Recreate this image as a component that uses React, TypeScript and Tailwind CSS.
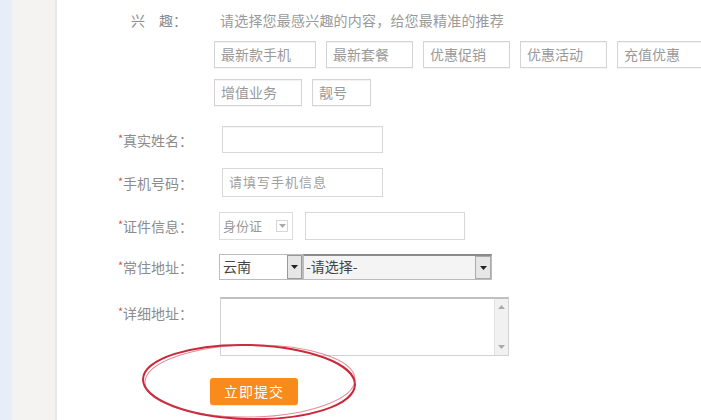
import React from "react";

const Tag = ({ text, w }: { text: string; w: string }) => (
  <div
    className={`${w} h-[27px] border border-[#d4d4d4] shadow-[inset_0_1px_1px_rgba(0,0,0,0.05),0_1px_0_rgba(0,0,0,0.04)] pl-[6px] text-[14px] leading-[25px] text-[#9a9a9a] shrink-0 bg-white`}
  >
    {text}
  </div>
);

const Label = ({ text }: { text: string }) => (
  <div className="flex items-center h-[20px] text-[14px] leading-[20px] text-[#8c8c8c]">
    <span className="text-[#e0504a] text-[11px] w-[4px] mr-[1px] -mt-[4px]">*</span>
    <span>{text}</span>
  </div>
);

const Tri = ({ down = true, color = "#222" }: { down?: boolean; color?: string }) => (
  <svg width="7" height="4" viewBox="0 0 7 4">
    {down ? <path d="M0 0 L7 0 L3.5 4 Z" fill={color} /> : <path d="M0 4 L7 4 L3.5 0 Z" fill={color} />}
  </svg>
);

export default function App() {
  return (
    <div
      className="w-[701px] h-[420px] flex overflow-hidden bg-white"
      style={{ fontFamily: '"Noto Sans CJK SC", "Noto Sans", sans-serif' }}
    >
      <div className="w-[12px] shrink-0 bg-[#e8eef8]" />
      <div className="w-[45px] shrink-0 bg-[#f4f3f1] border-r-2 border-[#e8e7e5]" />
      <div className="relative flex-1 pl-[61px] pt-[10px] flex flex-col">
        {/* interest */}
        <div className="flex items-center h-[20px]">
          <div className="w-[96px] pl-[13px] text-[14px] leading-[20px] text-[#8c8c8c]">兴　趣：</div>
          <div className="pl-[6px] text-[14px] leading-[20px] text-[#9a9a9a] whitespace-nowrap tracking-[0.2px]">
            请选择您最感兴趣的内容，给您最精准的推荐
          </div>
        </div>
        <div className="flex pl-[96px] mt-[11px] gap-[10px]">
          <Tag text="最新款手机" w="w-[102px]" />
          <Tag text="最新套餐" w="w-[87px]" />
          <Tag text="优惠促销" w="w-[87px]" />
          <Tag text="优惠活动" w="w-[87px]" />
          <Tag text="充值优惠" w="w-[87px]" />
        </div>
        <div className="flex pl-[96px] mt-[11px] gap-[10px]">
          <Tag text="增值业务" w="w-[88px]" />
          <Tag text="靓号" w="w-[59px]" />
        </div>

        {/* real name */}
        <div className="flex items-center mt-[20px] h-[27px]">
          <div className="w-[104px]">
            <Label text="真实姓名：" />
          </div>
          <div className="w-[161px] h-[27px] border border-[#d8d8d8] shadow-[inset_0_1px_1px_rgba(0,0,0,0.04)]" />
        </div>

        {/* phone */}
        <div className="flex items-center mt-[15px] h-[29px]">
          <div className="w-[104px]">
            <Label text="手机号码：" />
          </div>
          <div className="w-[161px] h-[29px] border border-[#d8d8d8] pl-[6px] text-[13px] leading-[25px] text-[#a0a0a0] tracking-[1px]">
            请填写手机信息
          </div>
        </div>

        {/* id */}
        <div className="flex items-center mt-[15px] h-[28px]">
          <div className="w-[101px]">
            <Label text="证件信息：" />
          </div>
          <div className="w-[74px] h-[28px] border border-[#dcdcdc] flex items-center pl-[3px] pr-[4px]">
            <span className="text-[13px] text-[#999] flex-1">身份证</span>
            <span className="w-[12px] h-[12px] border border-[#d6d6d6] flex items-center justify-center">
              <Tri color="#aaa" />
            </span>
          </div>
          <div className="ml-[12px] w-[160px] h-[28px] border border-[#d8d8d8]" />
        </div>

        {/* address */}
        <div className="flex items-center mt-[14px] h-[26px]">
          <div className="w-[101px]">
            <Label text="常住地址：" />
          </div>
          <div className="w-[84px] h-[26px] border border-[#bcbcbc] flex items-stretch bg-white">
            <span className="flex-1 pl-[3px] text-[14px] leading-[22px] text-[#444]">云南</span>
            <span className="w-[15px] bg-[#e6e6e6] border border-[#999] flex items-center justify-center">
              <Tri />
            </span>
          </div>
          <div className="w-[189px] h-[26px] border border-[#bcbcbc] border-t-2 border-t-[#8a8a8a] flex items-stretch bg-[#f4f4f4]">
            <span className="flex-1 pl-[2px] text-[14px] leading-[21px] text-[#444]">-请选择-</span>
            <span className="w-[16px] bg-[#e6e6e6] border border-[#aaa] flex items-center justify-center">
              <Tri />
            </span>
          </div>
        </div>

        {/* detail address */}
        <div className="flex items-start mt-[17px]">
          <div className="w-[102px] pt-[6px]">
            <Label text="详细地址：" />
          </div>
          <div className="w-[289px] h-[59px] border border-[#d2d2d2] border-t-2 border-t-[#c0c0c0] flex justify-end">
            <div className="w-[14px] bg-[#f1f1f1] border-l border-[#e2e2e2] flex flex-col items-center justify-between py-[6px]">
              <Tri down={false} color="#aaa" />
              <Tri color="#aaa" />
            </div>
          </div>
        </div>

        {/* submit */}
        <div className="flex mt-[22px] pl-[92px]">
          <div className="w-[88px] h-[27px] rounded-[3px] bg-[#f98a1c] text-white text-[14px] leading-[27px] text-center tracking-[1px] shadow-[0_1px_1px_rgba(0,0,0,0.1)]">
            立即提交
          </div>
        </div>

        {/* red hand-drawn ellipse */}
        <svg
          className="absolute left-[83px] top-[340px] pointer-events-none"
          width="222"
          height="82"
          viewBox="0 0 222 82"
        >
          <ellipse cx="109" cy="42" rx="106" ry="37" fill="none" stroke="#c8283a" strokeWidth="2" transform="rotate(1.5 109 42)" />
          <ellipse cx="110" cy="41" rx="105" ry="36" fill="none" stroke="#d04050" strokeWidth="1" opacity="0.6" transform="rotate(-1 110 41)" />
        </svg>
      </div>
    </div>
  );
}
